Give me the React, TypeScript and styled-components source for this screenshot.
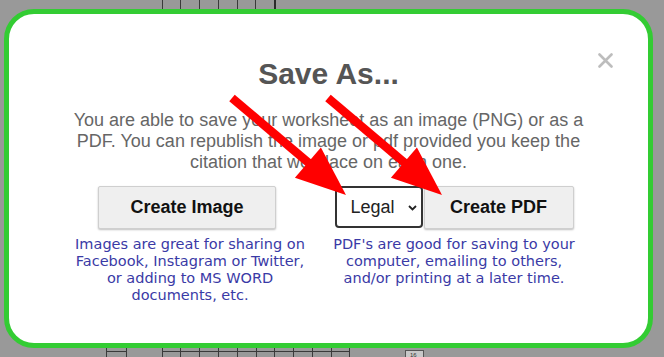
import styled, { createGlobalStyle } from "styled-components";

const GlobalStyle = createGlobalStyle`
  html, body { margin: 0; padding: 0; background: #999999; overflow: hidden; }
  * { box-sizing: border-box; }
`;

// worksheet lines that peek out behind the dialog
const topCols = [162, 180, 199, 218, 237, 255];
const bottomCols = [162, 180, 199, 218, 237, 256, 274, 293, 312, 331, 349];

export default function App() {
  return (
    <>
      <GlobalStyle />
      <Page>
        <Backdrop width="664" height="357" viewBox="0 0 664 357">
          {topCols.map((x) => (
            <line key={`t${x}`} x1={x + 0.5} y1="0" x2={x + 0.5} y2="10" stroke="#3a3a3a" strokeWidth="1" />
          ))}
          <line x1="275" y1="0" x2="275" y2="10" stroke="#2a2a2a" strokeWidth="2" />
          <line x1="106.5" y1="346" x2="106.5" y2="357" stroke="#3a3a3a" />
          <line x1="126.5" y1="346" x2="126.5" y2="357" stroke="#3a3a3a" />
          <line x1="106" y1="351.5" x2="127" y2="351.5" stroke="#3a3a3a" />
          {bottomCols.map((x) => (
            <line key={`b${x}`} x1={x + 0.5} y1="346" x2={x + 0.5} y2="357" stroke="#3a3a3a" />
          ))}
          <line x1="162" y1="351.5" x2="350" y2="351.5" stroke="#3a3a3a" />
          <rect x="405.5" y="350.5" width="18" height="8" fill="#c8c8c8" stroke="#555" />
          <text x="410" y="356.5" fontSize="6" fontFamily="Liberation Sans, Arial, sans-serif" fill="#333">16</text>
        </Backdrop>

        <Modal>
          <Close aria-label="close">
            <svg width="15" height="15" viewBox="0 0 15 15">
              <path d="M1.5 1.5 L13.5 13.5 M13.5 1.5 L1.5 13.5" stroke="#bdbdbd" strokeWidth="2.6" strokeLinecap="round" />
            </svg>
          </Close>

          <Title>Save As...</Title>
          <Intro>
            You are able to save your worksheet as an image (PNG) or as a
            <br />
            PDF. You can republish the image or pdf provided you keep the
            <br />
            citation that we place on each one.
          </Intro>

          <Options>
            <Option>
              <Controls $shift={6}>
                <ActionButton $width={178}>Create Image</ActionButton>
              </Controls>
              <Note>
                Images are great for sharing on
                <br />
                Facebook, Instagram or Twitter,
                <br />
                or adding to MS WORD
                <br />
                documents, etc.
              </Note>
            </Option>

            <Option>
              <Controls $shift={0}>
                <SelectWrap>
                  <PaperSelect defaultValue="legal">
                    <option value="letter">Letter</option>
                    <option value="legal">Legal</option>
                    <option value="a4">A4</option>
                  </PaperSelect>
                  <Chevron width="9" height="6" viewBox="0 0 9 6">
                    <path d="M1 1 L4.5 4.5 L8 1" fill="none" stroke="#222" strokeWidth="1.8" />
                  </Chevron>
                </SelectWrap>
                <ActionButton $width={150}>Create PDF</ActionButton>
              </Controls>
              <Note>
                PDF's are good for saving to your
                <br />
                computer, emailing to others,
                <br />
                and/or printing at a later time.
              </Note>
            </Option>
          </Options>
        </Modal>

        <Arrows width="664" height="357" viewBox="0 0 664 357">
          <line x1="232" y1="98" x2="310" y2="164" stroke="#ff0000" strokeWidth="8.5" />
          <polygon points="346,195 294.9,177.8 320.9,147.4" fill="#ff0000" />
          <line x1="328" y1="98" x2="406" y2="164" stroke="#ff0000" strokeWidth="8.5" />
          <polygon points="442,195 390.9,177.8 416.9,147.4" fill="#ff0000" />
        </Arrows>
      </Page>
    </>
  );
}

const Page = styled.div`
  position: relative;
  width: 664px;
  height: 357px;
  padding: 9px 11px 9px 4px;
  display: flex;
`;

const Backdrop = styled.svg`
  position: absolute;
  left: 0;
  top: 0;
`;

const Modal = styled.div`
  position: relative;
  flex: 1;
  background: #ffffff;
  border: 5px solid #33cc33;
  border-radius: 30px;
  padding-top: 43px;
  display: flex;
  flex-direction: column;
  align-items: center;
  font-family: "Liberation Sans", Arial, sans-serif;
`;

const Close = styled.button`
  position: absolute;
  top: 39px;
  right: 35px;
  width: 15px;
  height: 15px;
  padding: 0;
  border: none;
  background: none;
  display: flex;
  cursor: pointer;
`;

const Title = styled.h2`
  margin: 0;
  font-size: 30px;
  font-weight: 700;
  line-height: normal;
  color: #555555;
`;

const Intro = styled.p`
  margin: 19px 0 0;
  font-size: 18px;
  line-height: normal;
  color: #666666;
  text-align: center;
  white-space: nowrap;
`;

const Options = styled.div`
  margin-top: 13px;
  padding-right: 13px;
  align-self: stretch;
  display: flex;
  justify-content: center;
`;

const Option = styled.div`
  width: 264px;
  display: flex;
  flex-direction: column;
  align-items: center;
`;

const Controls = styled.div<{ $shift: number }>`
  display: flex;
  align-items: stretch;
  height: 43px;
  margin-right: ${(p) => p.$shift}px;
`;

const ActionButton = styled.button<{ $width: number }>`
  width: ${(p) => p.$width}px;
  padding: 0;
  background: #efefef;
  border: 1px solid #cfcfcf;
  border-radius: 2px;
  box-shadow: 0 1px 2px rgba(0, 0, 0, 0.25);
  font-family: "Liberation Sans", Arial, sans-serif;
  font-size: 18px;
  font-weight: 700;
  color: #111111;
  cursor: pointer;
`;

const SelectWrap = styled.div`
  position: relative;
  display: flex;
  margin-right: 1px;
`;

const PaperSelect = styled.select`
  appearance: none;
  width: 88px;
  height: 42px;
  padding: 0 0 0 14px;
  background: #ffffff;
  border: 2px solid #333333;
  border-radius: 4px;
  font-family: "Liberation Sans", Arial, sans-serif;
  font-size: 18px;
  color: #222222;
`;

const Chevron = styled.svg`
  position: absolute;
  right: 6px;
  top: 19px;
  pointer-events: none;
`;

const Note = styled.p`
  margin: 7px 0 0;
  font-family: "DejaVu Sans", Verdana, sans-serif;
  font-size: 14.5px;
  line-height: 17px;
  color: #3a3aa6;
  text-align: center;
  white-space: nowrap;
`;

const Arrows = styled.svg`
  position: absolute;
  left: 0;
  top: 0;
  pointer-events: none;
`;
